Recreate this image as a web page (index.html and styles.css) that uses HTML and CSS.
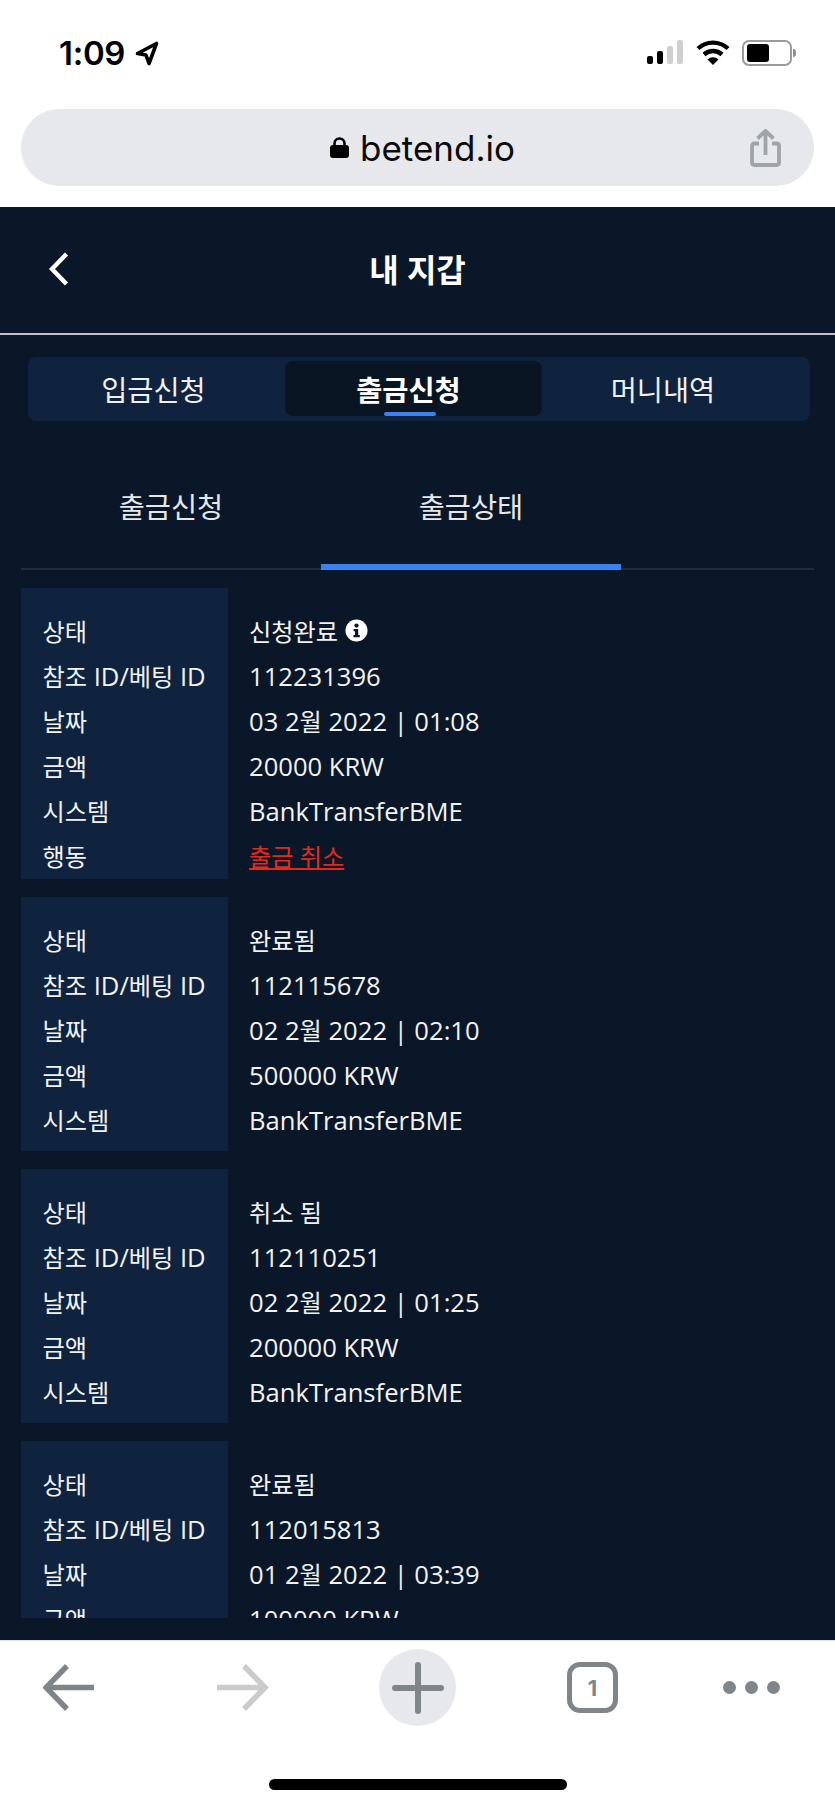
FILE: index.html
```html
<!DOCTYPE html>
<html lang="ko">
<head>
<meta charset="utf-8">
<title>내 지갑</title>
<link rel="stylesheet" href="styles.css">
</head>
<body>
<div class="phone">
  <div class="status">
    <div class="status-time"><span>1:09</span>
      <svg class="ico-loc" viewBox="0 0 24 25"><path d="M2.5 12.5 L21.5 2.5 L14 22.5 L11 14 Z"/></svg>
    </div>
    <div class="status-icons">
      <div class="signal"><i class="b1"></i><i class="b2"></i><i class="b3"></i><i class="b4"></i></div>
      <svg class="ico-wifi" viewBox="0 0 34 26"><path class="arc" d="M2 9.5 A22 22 0 0 1 32 9.5"/><path class="arc" d="M8 15.5 A13.5 13.5 0 0 1 26 15.5"/><path class="dot" d="M17 26 L11.5 20.5 A8 8 0 0 1 22.5 20.5 Z"/></svg>
      <div class="battery"><div class="battery-body"><div class="battery-fill"></div></div><div class="battery-nub"></div></div>
    </div>
  </div>

  <div class="urlbar">
    <div class="url">
      <svg class="ico-lock" viewBox="0 0 19 21"><path class="shackle" d="M4.5 10 V6.5 a5 5 0 0 1 10 0 V10"/><rect y="8" width="19" height="13" rx="3"/></svg>
      <span>betend.io</span>
    </div>
    <svg class="ico-share" viewBox="0 0 31 38"><path d="M15.5 26 V3 M7.5 9.5 L15.5 2 L23.5 9.5 M9 14.5 H4.5 Q2 14.5 2 17 V33.5 Q2 36 4.5 36 H26.5 Q29 36 29 33.5 V17 Q29 14.5 26.5 14.5 H22"/></svg>
  </div>

  <main class="app">
    <header class="app-head">
      <svg class="ico-back" viewBox="0 0 21 34"><path d="M18.5 2 L4 17 L18.5 32"/></svg>
      <h1>내 지갑</h1>
    </header>

    <nav class="tabs">
      <a class="tab tab-one">입금신청</a>
      <a class="tab tab-two active">출금신청</a>
      <a class="tab tab-three">머니내역</a>
    </nav>

    <nav class="subtabs">
      <a class="subtab">출금신청</a>
      <a class="subtab active">출금상태</a>
    </nav>

    <section class="list">
      <table class="card card-action">
        <tr><th><span class="ko">상태</span></th><td><span class="status-cell"><span class="ko">신청완료</span><svg class="ico-info" viewBox="0 0 24 24"><circle cx="12" cy="12" r="11.5"/><circle class="cut" cx="12" cy="6.8" r="2.2"/><path class="cut" d="M9 10.5 H13.8 V16.8 H15.4 V19 H8.8 V16.8 H10.4 V12.7 H9 Z"/></svg></span></td></tr>
        <tr><th><span class="ko">참조</span> ID/<span class="ko">베팅</span> ID</th><td>112231396</td></tr>
        <tr><th><span class="ko">날짜</span></th><td>03 2<span class="ko">월</span> 2022 | 01:08</td></tr>
        <tr><th><span class="ko">금액</span></th><td>20000 KRW</td></tr>
        <tr><th><span class="ko">시스템</span></th><td>BankTransferBME</td></tr>
        <tr><th><span class="ko">행동</span></th><td><a class="cancel ko">출금 취소</a></td></tr>
      </table>
      <table class="card">
        <tr><th><span class="ko">상태</span></th><td><span class="ko">완료됨</span></td></tr>
        <tr><th><span class="ko">참조</span> ID/<span class="ko">베팅</span> ID</th><td>112115678</td></tr>
        <tr><th><span class="ko">날짜</span></th><td>02 2<span class="ko">월</span> 2022 | 02:10</td></tr>
        <tr><th><span class="ko">금액</span></th><td>500000 KRW</td></tr>
        <tr><th><span class="ko">시스템</span></th><td>BankTransferBME</td></tr>
      </table>
      <table class="card">
        <tr><th><span class="ko">상태</span></th><td><span class="ko">취소 됨</span></td></tr>
        <tr><th><span class="ko">참조</span> ID/<span class="ko">베팅</span> ID</th><td>112110251</td></tr>
        <tr><th><span class="ko">날짜</span></th><td>02 2<span class="ko">월</span> 2022 | 01:25</td></tr>
        <tr><th><span class="ko">금액</span></th><td>200000 KRW</td></tr>
        <tr><th><span class="ko">시스템</span></th><td>BankTransferBME</td></tr>
      </table>
      <table class="card">
        <tr><th><span class="ko">상태</span></th><td><span class="ko">완료됨</span></td></tr>
        <tr><th><span class="ko">참조</span> ID/<span class="ko">베팅</span> ID</th><td>112015813</td></tr>
        <tr><th><span class="ko">날짜</span></th><td>01 2<span class="ko">월</span> 2022 | 03:39</td></tr>
        <tr><th><span class="ko">금액</span></th><td>100000 KRW</td></tr>
        <tr><th><span class="ko">시스템</span></th><td>BankTransferBME</td></tr>
      </table>
    </section>
  </main>

  <footer class="toolbar">
    <div class="toolbar-row">
      <svg class="tool tool-back" viewBox="0 0 51 47"><path d="M51 23.5 H4 M24 2 L3 23.5 L24 45"/></svg>
      <svg class="tool tool-forward" viewBox="0 0 52 47"><path d="M0 23.5 H47 M27 2 L48 23.5 L27 45"/></svg>
      <div class="tool-plus"><svg viewBox="0 0 52 52"><path d="M26 3 V49 M3 26 H49"/></svg></div>
      <div class="tool-tabs">1</div>
      <div class="tool-more"><i></i><i></i><i></i></div>
    </div>
    <div class="home-bar"></div>
  </footer>
</div>
</body>
</html>
```
FILE: styles.css
```css
* { box-sizing: border-box; }
html, body { margin: 0; padding: 0; background: #fff; }
.phone {
  width: 835px;
  height: 1807px;
  display: flex;
  flex-direction: column;
  overflow: hidden;
  font-family: "Open Sans", "Noto Sans CJK KR", sans-serif;
}

/* status bar */
.status {
  height: 109px;
  flex: none;
  padding: 39px 39px 0 59px;
  display: flex;
  justify-content: space-between;
  align-items: flex-start;
}
.status-time {
  display: flex;
  align-items: center;
  gap: 10px;
  height: 28px;
  font-family: Inter, "Liberation Sans", sans-serif;
  font-size: 33px;
  font-weight: 600;
  letter-spacing: -0.3px;
  color: #000;
}
.ico-loc { width: 24px; height: 25px; fill: none; stroke: #000; stroke-width: 3.6; stroke-linejoin: round; }
.status-icons { display: flex; align-items: flex-start; height: 27px; }
.signal { display: flex; align-items: flex-end; gap: 4px; height: 25px; margin-right: 13px; }
.signal i { display: block; width: 6px; border-radius: 2px; background: #000; }
.signal .b1 { height: 8px; }
.signal .b2 { height: 13px; }
.signal .b3 { height: 18px; background: #cfcfcf; }
.signal .b4 { height: 24px; background: #cfcfcf; }
.ico-wifi { width: 34px; height: 26px; margin-right: 12px; }
.ico-wifi .arc { fill: none; stroke: #000; stroke-width: 4.4; }
.ico-wifi .dot { fill: #000; }
.battery { display: flex; align-items: center; height: 26px; gap: 1px; margin-top: 1px; }
.battery-body { width: 50px; height: 26px; border: 2px solid #9b9b9b; border-radius: 7px; padding: 2px 3px; }
.battery-fill { width: 22px; height: 18px; background: #000; border-radius: 3px; }
.battery-nub { width: 3px; height: 8px; background: #8f8f8f; border-radius: 0 4px 4px 0; }

/* url bar */
.urlbar {
  flex: none;
  height: 77px;
  margin: 0 21px 21px;
  background: #e7e8ec;
  border-radius: 38px;
  display: grid;
  grid-template-columns: 1fr auto;
  align-items: center;
  padding: 0 33px 0 309px;
}
.url { display: flex; align-items: center; gap: 11px; color: #0a0a0a; font-family: Inter, "Liberation Sans", sans-serif; font-size: 35px; }
.ico-lock { width: 19px; height: 21px; fill: #000; }
.ico-lock .shackle { fill: none; stroke: #000; stroke-width: 2.6; }
.ico-share { width: 31px; height: 38px; fill: none; stroke: #9fa4aa; stroke-width: 3.8; stroke-linejoin: round; }

/* app */
.app {
  flex: 1;
  min-height: 0;
  background: #0a1729;
  color: #f2f3f4;
  display: flex;
  flex-direction: column;
  padding-bottom: 22px;
}
.app-head {
  flex: none;
  height: 128px;
  display: grid;
  grid-template-columns: 1fr auto 1fr;
  align-items: center;
  padding: 0 48px;
  border-bottom: 2px solid #bfc1c4;
}
.ico-back { width: 21px; height: 34px; fill: none; stroke: #fff; stroke-width: 4.4; margin-top: -2px; }
.app-head h1 { margin: 0; font-size: 32px; font-weight: 700; color: #fff; line-height: 40px; }

.tabs {
  flex: none;
  margin: 22px 25px 0 28px;
  height: 64px;
  background: #0f233e;
  border-radius: 8px;
  display: grid;
  grid-template-columns: 257px 257px 1fr;
  padding-top: 4px;
}
.tab { height: 55px; display: flex; align-items: center; justify-content: center; font-size: 28.4px; color: #eef0f2; position: relative; border-radius: 8px; }
.tab-one { padding-right: 6px; }
.tab-two { padding-right: 10px; }
.tab-three { padding-right: 26px; }
.tab.active { background: #0a1524; font-weight: 700; color: #fff; }
.tab.active::after {
  content: "";
  position: absolute;
  left: 99px;
  bottom: 0;
  width: 52px;
  height: 4px;
  border-radius: 2px;
  background: #3b82ee;
}

.subtabs {
  flex: none;
  margin: 0 21px;
  height: 149px;
  display: flex;
  align-items: stretch;
  border-bottom: 2px solid #1f2c3e;
}
.subtab { width: 300px; height: 149px; display: flex; align-items: center; justify-content: center; font-size: 28.4px; color: #e6e8ea; padding-top: 20px; }
.subtab.active { border-bottom: 6px solid #3b82ee; padding-top: 26px; margin-bottom: -2px; }

.list {
  flex: 1;
  min-height: 0;
  overflow: hidden;
  margin: 18px 21px 0;
  display: flex;
  flex-direction: column;
  gap: 17.5px;
}
.card { flex: none; width: 100%; border-collapse: collapse; table-layout: fixed; font-size: 25.6px; }
.ko { font-size: 24.2px; }
.card th, .card td { height: 45px; line-height: 45px; padding: 0; vertical-align: top; font-weight: 400; text-align: left; white-space: nowrap; }
.card th { width: 207px; background: #0f233e; padding-left: 21.5px; }
.card td { padding-left: 21px; }
.card tr:first-child th, .card tr:first-child td { padding-top: 21px; height: 66px; }
.card tr:last-child th, .card tr:last-child td { padding-bottom: 8.5px; height: 53.5px; }
.card-action tr:last-child th, .card-action tr:last-child td { padding-bottom: 0; height: 45px; }
.status-cell { display: inline-flex; align-items: center; gap: 7px; }
.ico-info { width: 23px; height: 23px; fill: #fff; margin-top: -3px; }
.ico-info .cut { fill: #0a1729; }
.cancel { color: #e2291f; text-decoration: underline; }

/* toolbar */
.toolbar { flex: none; height: 167px; background: #fff; border-top: 1px solid #e3e4e6; }
.toolbar-row { display: flex; align-items: center; height: 86px; padding: 7px 0 0 43px; }
.tool { fill: none; stroke-width: 5.5; }
.tool-back { width: 51px; height: 47px; stroke: #80858a; }
.tool-forward { width: 52px; height: 47px; margin-left: 123px; stroke: #cbcbcb; }
.tool-plus { width: 77px; height: 77px; margin-left: 110px; border-radius: 50%; background: #e7e8ec; display: flex; align-items: center; justify-content: center; }
.tool-plus svg { width: 52px; height: 52px; fill: none; stroke: #80858a; stroke-width: 6; stroke-linecap: round; }
.tool-tabs { width: 51px; height: 51px; margin-left: 111px; border: 5px solid #80858a; border-radius: 13px; display: flex; align-items: center; justify-content: center; color: #80858a; font-size: 22px; font-weight: 700; font-family: Inter, sans-serif; }
.tool-more { display: flex; gap: 9px; margin-left: 105px; }
.tool-more i { display: block; width: 13px; height: 13px; border-radius: 50%; background: #80858a; }
.home-bar { width: 298px; height: 11px; margin: 52px auto 0; background: #000; border-radius: 6px; }
```
